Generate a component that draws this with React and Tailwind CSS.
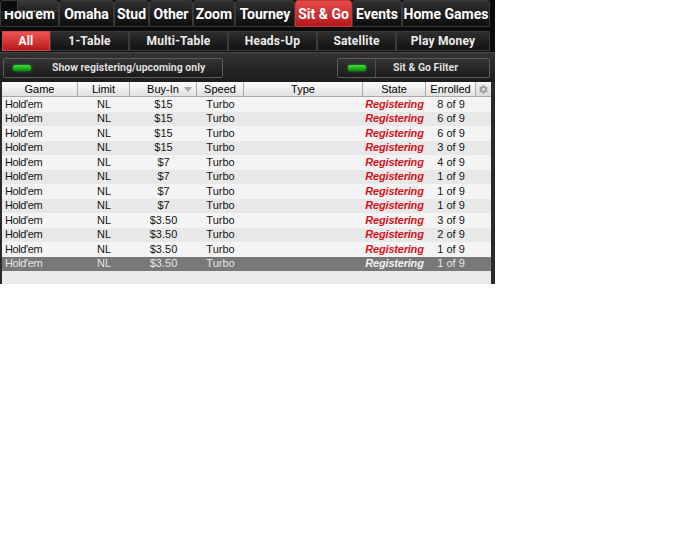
import React from "react";
import { FaCog } from "react-icons/fa";

const tabs = [
  { label: "Hold'em", w: "w-[59px]", first: true },
  { label: "Omaha", w: "w-[55px]" },
  { label: "Stud", w: "w-[35px]" },
  { label: "Other", w: "w-[44px]" },
  { label: "Zoom", w: "w-[42px]" },
  { label: "Tourney", w: "w-[60px]" },
  { label: "Sit & Go", w: "w-[57px]", active: true },
  { label: "Events", w: "w-[50px]" },
  { label: "Home Games", w: "w-[88px]" },
];

const subs = [
  { label: "All", w: "w-[48px]", active: true },
  { label: "1-Table", w: "w-[79px]" },
  { label: "Multi-Table", w: "w-[99px]" },
  { label: "Heads-Up", w: "w-[89px]" },
  { label: "Satellite", w: "w-[79px]" },
  { label: "Play Money", w: "w-[94px]" },
];

const rows = [
  ["$15", 8], ["$15", 6], ["$15", 6], ["$15", 3],
  ["$7", 4], ["$7", 1], ["$7", 1], ["$7", 1],
  ["$3.50", 3], ["$3.50", 2], ["$3.50", 1], ["$3.50", 1],
];

const cols = "grid grid-cols-[76px_52px_67px_47px_119px_63px_50px_15px]";

function Led() {
  return (
    <div className="w-[18px] h-[6px] rounded-[2px] bg-gradient-to-b from-[#3ee03e] to-[#0d8a0d] shadow-[0_0_3px_#1faa1f]" />
  );
}

export default function App() {
  return (
    <div className="w-[495px] bg-[#0b0b0b] select-none" style={{ fontFamily: "Roboto, 'Liberation Sans', sans-serif" }}>
      {/* main tabs */}
      <div className="flex h-[27px]">
        {tabs.map((t) => (
          <div
            key={t.label}
            className={
              "relative shrink-0 flex items-center justify-center text-[14px] font-bold text-white border border-[#3a3a3a] rounded-t-[3px] overflow-hidden " +
              t.w +
              (t.active
                ? " bg-gradient-to-b from-[#e94848] to-[#b3171b] border-[#c53a3a]"
                : " bg-gradient-to-b from-[#303030] to-[#0e0e0e]")
            }
          >
            <span className="whitespace-nowrap leading-none">{t.label}</span>
            {t.first && (
              <div className="absolute top-0 left-0 right-0 h-[10px] flex">
                <div className="w-[16px] bg-[#0b0b0b]" />
                <div className="flex-1 bg-gradient-to-b from-[#3a3a3a] to-[#222222] rounded-tl-[3px] border-l border-b border-[#444444]" />
              </div>
            )}
          </div>
        ))}
      </div>

      {/* sub tabs */}
      <div className="flex h-[20px] mt-[4px] pl-[2px]">
        {subs.map((s) => (
          <div
            key={s.label}
            className={
              "shrink-0 flex items-center justify-center text-[12px] font-bold border tracking-[0.2px] " +
              s.w +
              (s.active
                ? " text-white bg-gradient-to-b from-[#ef5252] to-[#b8161b] border-[#d24848]"
                : " text-[#ececec] bg-gradient-to-b from-[#2e2e2e] to-[#121212] border-[#3b3b3b]")
            }
          >
            {s.label}
          </div>
        ))}
      </div>

      {/* filter bar */}
      <div className="mt-[1px] h-[30px] bg-gradient-to-b from-[#333333] to-[#1c1c1c] border-t border-[#4a4a4a] flex items-center px-[3px] pt-[1px]">
        <div className="w-[220px] h-[20px] flex items-center border border-[#5c5c5c] rounded-[2px] bg-gradient-to-b from-[#353535] to-[#1b1b1b]">
          <div className="ml-[9px] mr-[21px]">
            <Led />
          </div>
          <span className="text-[10.5px] font-bold text-[#dedede] whitespace-nowrap">
            Show registering/upcoming only
          </span>
        </div>
        <div className="flex-1" />
        <div className="w-[153px] h-[20px] flex border border-[#5c5c5c] rounded-[2px] bg-gradient-to-b from-[#353535] to-[#1b1b1b] mr-[2px]">
          <div className="w-[38px] flex items-center justify-center border-r border-[#4a4a4a]">
            <Led />
          </div>
          <div className="flex-1 flex items-center justify-center pr-[14px] text-[10.5px] font-bold text-[#dedede]">
            Sit &amp; Go Filter
          </div>
        </div>
      </div>

      {/* table */}
      <div className="relative pl-[2px] pr-[4px] bg-[#2a2a2a]" style={{ fontFamily: "'Liberation Sans', Arial, sans-serif" }}>
        <div className={cols + " h-[15px] text-[11px] text-black"}>
          {["Game", "Limit", "Buy-In", "Speed", "Type", "State", "Enrolled"].map((h) => (
            <div
              key={h}
              className="relative flex items-center justify-center bg-gradient-to-b from-[#fbfbfb] to-[#e1e1e1] border-r border-b border-[#a9a9a9] leading-none"
            >
              {h}
              {h === "Buy-In" && (
                <svg className="absolute right-[4px] top-[5px]" width="8" height="5" viewBox="0 0 8 5">
                  <path d="M0 0 H8 L4 5 Z" fill="#a8a8a8" />
                </svg>
              )}
            </div>
          ))}
          <div className="flex items-center justify-center bg-gradient-to-b from-[#f4f4f4] to-[#dadada] border-b border-[#a9a9a9]">
            <FaCog className="text-[#a0a0a0]" size={9} />
          </div>
        </div>
        {rows.map(([buy, n], i) => {
          const sel = i === rows.length - 1;
          const bg = sel ? "bg-[#787878]" : i % 2 === 0 ? "bg-[#f4f4f4]" : "bg-[#e8e8e8]";
          const txt = sel ? "text-[#e6e6e6]" : "text-[#141414]";
          return (
            <div key={i} className={cols + " h-[14.5px] items-center text-[11px] leading-none " + bg + " " + txt}>
              <div className="pl-[3px] tracking-[-0.4px]">Hold'em</div>
              <div className="text-center">NL</div>
              <div className="text-center">{buy}</div>
              <div className="text-center">Turbo</div>
              <div />
              <div
                className={
                  "text-center font-bold italic tracking-[-0.2px] " +
                  (sel ? "text-[#f2f2f2]" : "text-[#d6121b]")
                }
              >
                Registering
              </div>
              <div className="text-center">{n} of 9</div>
              <div />
            </div>
          );
        })}
        <div className="h-[13px] bg-[#ebebeb]" />
        <svg className="absolute left-[420px] top-[235px] pointer-events-none" width="50" height="48" viewBox="0 0 50 48">
          <path d="M25 0 L31 18 L50 18 L35 29 L41 48 L25 36 L9 48 L15 29 L0 18 L19 18 Z" fill="#ffffff" opacity="0.35" />
        </svg>
      </div>
    </div>
  );
}
